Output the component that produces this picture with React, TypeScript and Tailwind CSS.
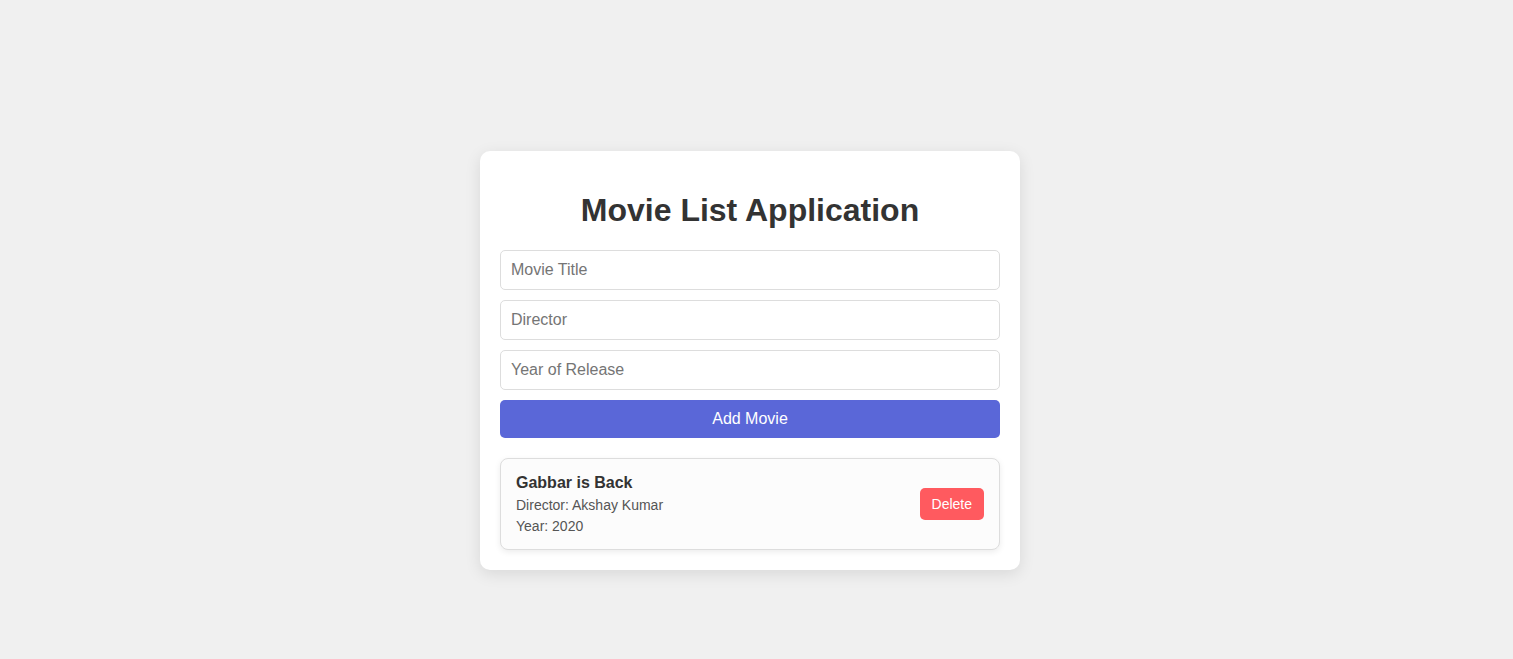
import React, { useState } from 'react';

interface Movie {
  title: string;
  director: string;
  year: string;
}

const MovieItem = ({ movie, onDelete }: { movie: Movie; onDelete: () => void }) => {
  return (
    <li className="flex items-center justify-between p-[15px] bg-[#fcfcfc] border border-[#ddd] rounded-[8px] shadow-[0_2px_6px_rgba(0,0,0,0.08)]">
      <div>
        <h3 className="text-base leading-[18px] font-bold text-[#333]">{movie.title}</h3>
        <p className="mt-[5px] text-sm leading-[16px] text-[#555]">Director: {movie.director}</p>
        <p className="mt-[5px] text-sm leading-[16px] text-[#555]">Year: {movie.year}</p>
      </div>
      <button
        onClick={onDelete}
        className="h-[32px] px-[12px] text-sm text-white bg-[#ff5a5f] rounded-[5px]"
      >
        Delete
      </button>
    </li>
  );
};

const App = () => {
  const [movies, setMovies] = useState<Movie[]>([
    { title: 'Gabbar is Back', director: 'Akshay Kumar', year: '2020' },
  ]);
  const [title, setTitle] = useState('');
  const [director, setDirector] = useState('');
  const [year, setYear] = useState('');

  const addMovie = () => {
    if (!title || !director || !year) return;
    setMovies([...movies, { title, director, year }]);
    setTitle('');
    setDirector('');
    setYear('');
  };

  const inputClass =
    'w-full h-[40px] px-[10px] text-base border border-[#ddd] rounded-[5px] outline-none placeholder:text-[#757575] text-[#333]';

  return (
    <div className="min-h-[659px] bg-[#f0f0f0] flex justify-center pr-[13px] pt-[151px] font-['Liberation_Sans',Arial,sans-serif]">
      <div className="w-[540px] self-start bg-white rounded-[10px] p-[20px] shadow-[0_4px_16px_rgba(0,0,0,0.1)]">
        <h1 className="mt-[21px] mb-[21px] text-[32px] leading-[37px] font-bold text-center text-[#333]">
          Movie List Application
        </h1>
        <div className="flex flex-col gap-[10px]">
          <input
            className={inputClass}
            placeholder="Movie Title"
            value={title}
            onChange={(e) => setTitle(e.target.value)}
          />
          <input
            className={inputClass}
            placeholder="Director"
            value={director}
            onChange={(e) => setDirector(e.target.value)}
          />
          <input
            className={inputClass}
            placeholder="Year of Release"
            value={year}
            onChange={(e) => setYear(e.target.value)}
          />
          <button
            onClick={addMovie}
            className="h-[38px] w-full text-base text-white bg-[#5a67d8] rounded-[5px]"
          >
            Add Movie
          </button>
        </div>
        <ul className="mt-[20px] flex flex-col gap-[10px]">
          {movies.map((m, i) => (
            <MovieItem
              key={i}
              movie={m}
              onDelete={() => setMovies(movies.filter((_, j) => j !== i))}
            />
          ))}
        </ul>
      </div>
    </div>
  );
};

export default App;
